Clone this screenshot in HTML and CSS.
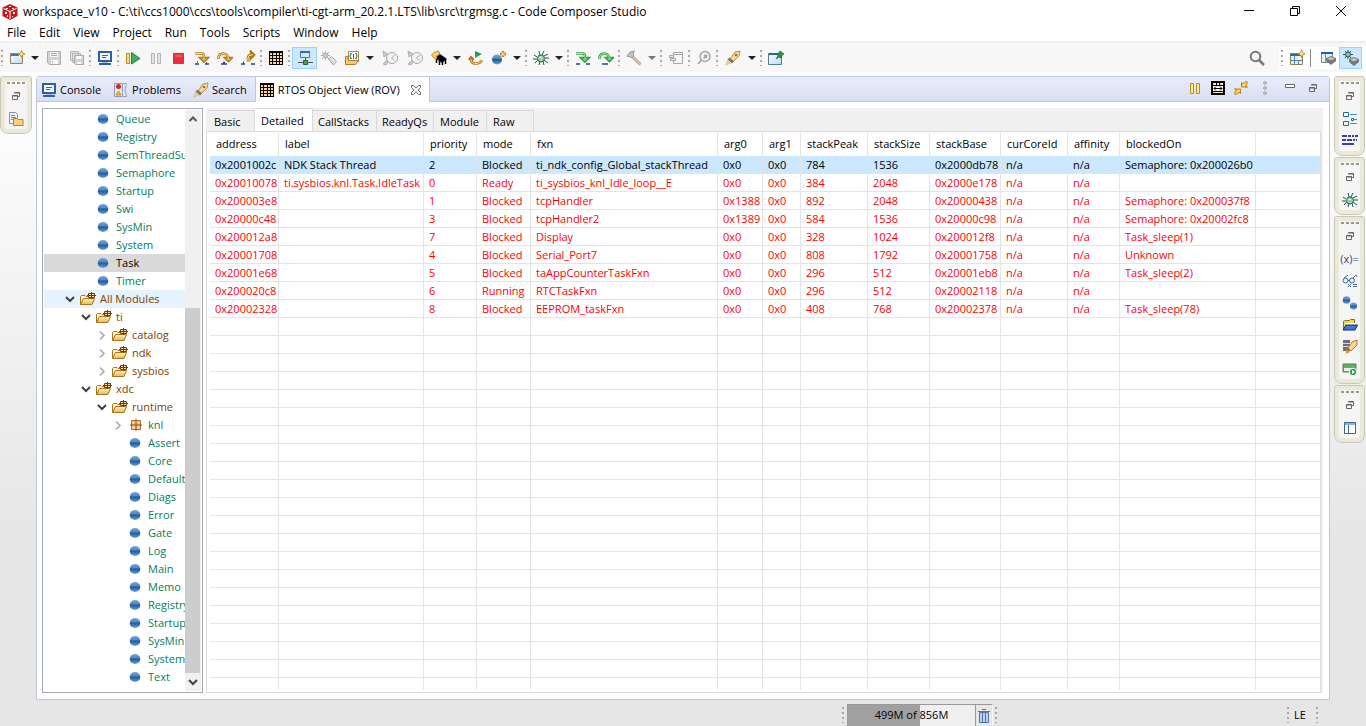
FILE: index.html
```html
<!DOCTYPE html>
<html lang="en">
<head>
<meta charset="utf-8">
<title>workspace_v10 - Code Composer Studio</title>
<link rel="stylesheet" href="styles.css">
</head>
<body>
<svg class="defs" aria-hidden="true">
  <defs>
    <linearGradient id="ball" x1="0" y1="0" x2="0" y2="1"><stop offset="0" stop-color="#7ba6cf"/><stop offset=".4" stop-color="#4f86bb"/><stop offset=".5" stop-color="#1a5a9c"/><stop offset="1" stop-color="#6fa0cd"/></linearGradient>
    <linearGradient id="gold" x1="0" y1="0" x2="0" y2="1"><stop offset="0" stop-color="#fff3c4"/><stop offset="1" stop-color="#e9b850"/></linearGradient>
    <linearGradient id="sky" x1="0" y1="0" x2="1" y2="1"><stop offset="0" stop-color="#fff"/><stop offset="1" stop-color="#b8dcee"/></linearGradient>
  </defs>
  <symbol id="cube" viewBox="0 0 16 16"><path d="M8 0l7.500 3.500v8.500L8 16 .5 12V3.500z" fill="#c8161d"/><path d="M1.500 4.500l6.500 3 6.500-3M8 7.500V15" stroke="#fff" fill="none"/><path d="M7 2h2v1H7zM4 4h2v1H4zM10 4h2v1h-2zM3 8h2v2H3zM5 11h1v2H5zM11 8h2v2h-2zM10 12h1v1h-1z" fill="#fff"/></symbol>
  <symbol id="dot" viewBox="0 0 16 16"><ellipse cx="8" cy="8" rx="5.300" ry="5" fill="url(#ball)"/></symbol>
  <symbol id="pkgs" viewBox="0 0 16 16"><path d="M.5 13.500v-8l1-1H5l1 1h7.500v3" fill="#fff1c8" stroke="#a9741b"/><path d="M.5 13.500l3-6h11l-2.500 6z" fill="url(#gold)" stroke="#a9741b"/><path d="M8.500 2.500h6v4h-6z" fill="#f6dcb0" stroke="#6b3d14"/><path d="M7 4.500h9M11.500 1v7" fill="none" stroke="#6b3d14"/></symbol>
  <symbol id="pkg" viewBox="0 0 16 16"><path d="M3.500 3.500h9v9h-9z" fill="#f3c68c" stroke="#b36a2c"/><path d="M8 2v12M2 8h12" stroke="#8c4a1c"/><path d="M5 5h1v1H5zM10 5h1v1h-1zM5 10h1v1H5zM10 10h1v1h-1z" fill="#fff0d0"/></symbol>
  <symbol id="down" viewBox="0 0 16 16"><path d="M4 6l4 4 4-4" fill="none" stroke="#404040" stroke-width="2"/></symbol>
  <symbol id="up" viewBox="0 0 16 16"><path d="M4.500 10L8 6.500l3.500 3.500" fill="none" stroke="#555" stroke-width="2"/></symbol>
  <symbol id="right" viewBox="0 0 16 16"><path d="M6 4.500l4 4-4 4" fill="none" stroke="#a6a6a6" stroke-width="1.500"/></symbol>
  <symbol id="new" viewBox="0 0 16 16"><path d="M1.500 3.500h12v10h-12z" fill="url(#sky)" stroke="#9a8148"/><path d="M2 4h8v2H2z" fill="#3f78b5"/><path d="M12.500.5l1 2.500 2.500 1-2.500 1-1 2.500-1-2.500L9 4l2.500-1z" fill="#ffe9a0" stroke="#b38213" stroke-width=".8"/></symbol>
  <symbol id="save" viewBox="0 0 16 16"><path d="M1.500 1.500h13v13h-11l-2-2z" fill="#d2d2d2" stroke="#acacac"/><path d="M4 2h8v5H4zM5 10h7v4H5z" fill="#f7f7f7"/><path d="M5 3.500h6M5 5.500h6M6.500 11v2" stroke="#aaa"/></symbol>
  <symbol id="saveall" viewBox="0 0 16 16"><path d="M1.500 1.500h8v9h-8zM3.500 3.500h8v9h-8z" fill="#e2e2e2" stroke="#b4b4b4"/><path d="M5.500 5.500h9v9h-8l-1-1z" fill="#d2d2d2" stroke="#aaa"/><path d="M7.500 6h5v3h-5zM8 12h4v2H8z" fill="#fff"/></symbol>
  <symbol id="console" viewBox="0 0 16 16"><path d="M2 2h12v9H2z" fill="#f4f8fd" stroke="#2d5fa0" stroke-width="2"/><path d="M5 5.500h6M5 7.500h4" stroke="#53607c"/><path d="M2 14h12" stroke="#365f9c" stroke-width="2"/><path d="M5 12.500h6" stroke="#a9bdd6"/></symbol>
  <symbol id="resume" viewBox="0 0 16 16"><path d="M1.500 3.500h3v10h-3z" fill="#f6dc80" stroke="#b08f24"/><path d="M6.500 2.500L15 8.500l-8.500 5.500z" fill="#43ad5c" stroke="#278047"/></symbol>
  <symbol id="pause" viewBox="0 0 16 16"><path d="M3.500 3.500h3v10h-3zM9.500 3.500h3v10h-3z" fill="#e4e4e4" stroke="#b4b4b4"/></symbol>
  <symbol id="pausegold" viewBox="0 0 16 16"><path d="M3.500 3.500h3v10h-3zM9.500 3.500h3v10h-3z" fill="#fbe69a" stroke="#bd8c17"/></symbol>
  <symbol id="stop" viewBox="0 0 16 16"><path d="M2.500 3.500h10v10h-10z" fill="#e8303c" stroke="#d33"/><path d="M4 5h7v2H4z" fill="#f05a62"/></symbol>
  <symbol id="into" viewBox="0 0 16 16"><path d="M1 3.500h6.500q2.500 0 2.500 3v2M6.500 8L10 11.500 13.500 8z" fill="none" stroke="#b27b19" stroke-width="2.600"/><path d="M1 3.500h6.500q2.500 0 2.500 3v3M8 8.500l2 2 2-2" fill="none" stroke="#fbe08f"/><path d="M1 14h4M11 14h4M3 12h1M12 13h1" stroke="#24467e" stroke-width="1.500"/></symbol>
  <symbol id="over" viewBox="0 0 16 16"><path d="M1.500 9V7q1-3.500 5-3.500t5 5.500M8.500 8l3 3 3-3z" fill="none" stroke="#b27b19" stroke-width="2.600"/><path d="M1.500 8.500V7q1-3.500 5-3.500t5 5.500M10 8.500l1.500 1.500L13 8.500" fill="none" stroke="#fbe08f"/><path d="M4 14h6M6 12.500h2" stroke="#24467e" stroke-width="1.500"/></symbol>
  <symbol id="ret" viewBox="0 0 16 16"><path d="M8 12V8q0-3 3-3h1M11 2l3 3-3 3z" fill="none" stroke="#b27b19" stroke-width="2.600"/><path d="M8 12V8q0-3 3-3h2" fill="none" stroke="#fbe08f"/><path d="M1 14h4M11 14h4M3 12.500h1" stroke="#24467e" stroke-width="1.500"/></symbol>
  <symbol id="ginto" viewBox="0 0 16 16"><path d="M1 3.500h6.500q2.500 0 2.500 3v2M6.500 8L10 11.500 13.500 8z" fill="none" stroke="#30a048" stroke-width="2.600"/><path d="M1 3.500h6.500q2.500 0 2.500 3v3M8 8.500l2 2 2-2" fill="none" stroke="#b8ecb0"/><path d="M1 14h4M11 14h4" stroke="#24467e" stroke-width="1.500"/></symbol>
  <symbol id="gover" viewBox="0 0 16 16"><path d="M1.500 9V7q1-3.500 5-3.500t5 5.500M8.500 8l3 3 3-3z" fill="none" stroke="#30a048" stroke-width="2.600"/><path d="M1.500 8.500V7q1-3.500 5-3.500t5 5.500M10 8.500l1.500 1.500L13 8.500" fill="none" stroke="#b8ecb0"/><path d="M4 14h6" stroke="#24467e" stroke-width="1.500"/></symbol>
  <symbol id="grid" viewBox="0 0 16 16"><path d="M1 1h14v14H1z" fill="#000"/><path d="M2 3h2v2H2zM5 3h3v2H5zM9 3h2v2H9zM12 3h2v2h-2zM2 6h2v2H2zM5 6h3v2H5zM9 6h2v2H9zM12 6h2v2h-2zM2 9h2v2H2zM5 9h3v2H5zM9 9h2v2H9zM12 9h2v2h-2zM2 12h2v2H2zM5 12h3v2H5zM9 12h2v2H9zM12 12h2v2h-2z" fill="#ffd98a"/></symbol>
  <symbol id="probe" viewBox="0 0 16 16"><path d="M3.500 1.500h9v6h-9z" fill="#d7e7f6" stroke="#4778ae"/><path d="M3 2h10" stroke="#386aa5" stroke-width="2"/><path d="M8.500 7.500V11M1 12.500h15" stroke="#555"/><path d="M6.500 10.500h4v4h-4z" fill="#5a9c48" stroke="#27672b"/></symbol>
  <symbol id="plug" viewBox="0 0 16 16"><path d="M0 5.500h9M4.500 1v9M1 2l7 7M8 2L1 9" stroke="#aaa"/><circle cx="4.500" cy="5.500" r="2.500" fill="#ccc" stroke="#aaa"/><path d="M7.500 9l3-2.500 5 5-3 3.500z" fill="#e2e2e2" stroke="#a3a3a3"/></symbol>
  <symbol id="load" viewBox="0 0 16 16"><path d="M4.500 1.500h10v10h-10z" fill="#fff" stroke="#b0863b"/><path d="M8 3.500H6.500v2l-1 .5 1 .5v2H8M11 3.500h1.500v2l1 .5-1 .5v2H11M9.500 4v5" fill="none" stroke="#24768b"/><path d="M1.500 6.500v8h10l3-4h-10l-1-4z" fill="#f5cb70" stroke="#b47b20"/></symbol>
  <symbol id="clock" viewBox="0 0 16 16"><circle cx="10" cy="8" r="5.500" fill="#f3f3f3" stroke="#aaa"/><path d="M9.500 8L13 5M9.500 8l3 2.500" stroke="#aaa"/><path d="M1 1l5 3-4 3zM1 14l4-4 1 2-2 3z" fill="#ccc" stroke="#b0b0b0"/></symbol>
  <symbol id="chip" viewBox="0 0 16 16"><path d="M4 8l5-4 7 5-5 4z" fill="#000"/><path d="M5.500 9v4M8.500 11v4M11.500 12v3M14.500 10v4" stroke="#000" stroke-width="1.500"/><path d="M.5 5l3-3h2l1-1.500L9 3 7 5.500 5.500 6v3L3 8z" fill="#f6ce67" stroke="#bd8c22"/></symbol>
  <symbol id="restart" viewBox="0 0 16 16"><path d="M1 10l2-2.500L5.500 10M3 9q0 5 6 4.500 4-.5 4.500-3.500" fill="none" stroke="#aa741b" stroke-width="2.600"/><path d="M3 9q0 5 6 4.500 4-.5 4.500-3.500" fill="none" stroke="#fbe08f"/><path d="M7 1l7 3-7 4z" fill="#2b995c"/></symbol>
  <symbol id="sphere" viewBox="0 0 16 16"><circle cx="6" cy="9.500" r="5" fill="url(#ball)"/><path d="M12 1v6M9 4h6" stroke="#b88119" stroke-width="2.500"/><path d="M12 2v4M10 4h4" stroke="#ffe39a"/></symbol>
  <symbol id="bug" viewBox="0 0 16 16"><path d="M1 5l3 2M0 9h4M2 13l3-3M6 1l1 4M11 1L9 5M15 4l-4 2M16 8h-4M15 13l-4-3M6 15l1-4M11 15l-1-4" stroke="#264f4c"/><ellipse cx="8" cy="8.500" rx="3.500" ry="3.500" fill="#9ecfa4" stroke="#22685c"/><path d="M6 7.500h3" stroke="#e6f5d8"/></symbol>
  <symbol id="hammer" viewBox="0 0 16 16"><path d="M6 5l9 8.500L13.500 15 5 7z" fill="#dcbfae" stroke="#b79a88"/><path d="M1 6l3-4 5-1-2 2 1 2-3 3-2-2-1 1z" fill="#c4c4c4" stroke="#9a9a9a"/></symbol>
  <symbol id="stack" viewBox="0 0 16 16"><path d="M5.500 5V2.500h9v11h-9V11M5 4.500h9" fill="none" stroke="#a7a7a7"/><path d="M1.500 5.500h4v2h-4zM2.500 8.500h5v2h-5z" fill="#eee" stroke="#a5a5a5"/></symbol>
  <symbol id="lens" viewBox="0 0 16 16"><circle cx="9" cy="6.500" r="5" fill="#f6f6f6" stroke="#a5a5a5" stroke-width="1.500"/><path d="M5.500 10L2 14M7.500 8.500L11 5M8 5.500h2.500V8" fill="none" stroke="#a0a0a0" stroke-width="1.500"/></symbol>
  <symbol id="rocket" viewBox="0 0 16 16"><path d="M5.500 8.500L10 2l5-1-1 5-6 5.500z" fill="#ffd992" stroke="#c88930"/><path d="M4.500 7.500l4.500 4-2 2-4.500-4z" fill="#7d7478"/><path d="M1 15l1.500-4.500 3 2.500z" fill="#f2dd95" stroke="#dcc070"/><circle cx="11" cy="5" r="1.300" fill="#587ba5"/></symbol>
  <symbol id="pin" viewBox="0 0 16 16"><path d="M.5 3.500h13v11H.5z" fill="url(#sky)" stroke="#507b91"/><path d="M1 4h10" stroke="#2965a5" stroke-width="2"/><path d="M8 9l2-3-1-2 2-1 1-2 4 3-2 1-1 3-2-1z" fill="#26934e" stroke="#176336" stroke-width=".7"/></symbol>
  <symbol id="search" viewBox="0 0 16 16"><circle cx="6.500" cy="6.500" r="4.800" fill="none" stroke="#777" stroke-width="2"/><path d="M10 10l5 5" stroke="#777" stroke-width="2.500"/></symbol>
  <symbol id="persp" viewBox="0 0 16 16"><path d="M1.500 3.500h12v11h-12z" fill="#e3f1fa" stroke="#8a8056"/><path d="M1 5h12" stroke="#2d6aa5" stroke-width="2"/><path d="M5.500 6v8M2 10.500h11M9.500 10v4" stroke="#5285a6"/><path d="M12.500 0l1 2.500L16 4l-2.500 1-1 2.500-1-2.500L9 4l2.500-1.500z" fill="#ffe7a0" stroke="#b38213" stroke-width=".8"/></symbol>
  <symbol id="edit" viewBox="0 0 16 16"><path d="M1.500 2.500h11v10h-11z" fill="#e3f1fa" stroke="#718c72"/><path d="M1 3h12" stroke="#195fa9" stroke-width="2"/><path d="M5.500 4v8M5 8.500h8" stroke="#7796a5"/><path d="M6 8l5-2 5 2v3l-5 4-5-4z" fill="#777"/><path d="M7 8.500l4 2 4-2-4-1.500z" fill="#c0c0c0"/></symbol>
  <symbol id="debug" viewBox="0 0 16 16"><path d="M0 4.500h10M2 1l6 7M8 1L2 8M5 0v9" stroke="#24584d"/><circle cx="5" cy="4.500" r="2.500" fill="#8ac6a0" stroke="#24584d"/><path d="M6 9l5-2 5 2v3l-5 4-5-4z" fill="#777"/><path d="M7 9.500l4 2 4-2L11 8z" fill="#c5c5c5"/></symbol>
  <symbol id="problems" viewBox="0 0 16 16"><path d="M1.500 1.500h8v13h-8z" fill="#eee8dc" stroke="#8a9ab5"/><path d="M9.500 1.500h4L12 8l1.500 6.500h-4z" fill="#dce8f5" stroke="#95a4bd"/><circle cx="5.500" cy="4.500" r="2.500" fill="#d92531"/><path d="M3 13l2.500-4L8 13z" fill="#f5c24f" stroke="#c88f20"/></symbol>
  <symbol id="close" viewBox="0 0 16 16"><path d="M3.500 3.500h2L8 6l2.500-2.500h2v2L10 8l2.500 2.500v2h-2L8 10l-2.500 2.500h-2v-2L6 8 3.500 5.500z" fill="#fff" stroke="#6c6c6c"/></symbol>
  <symbol id="width" viewBox="0 0 16 16"><path d="M2 2h12v12H2z" fill="#fff" stroke="#000" stroke-width="2"/><path d="M3 3h3v2H3zM7 3h2v2H7zM10 3h3v2h-3zM3 12h3v1H3zM7 12h2v1H7zM10 12h3v1h-3z" fill="#ffe1a0"/><path d="M2 5.500h12M2 11.500h12M6.500 2v4M9.500 2v4M4 8.500h8M6 6.500l-2 2 2 2M10 6.500l2 2-2 2" fill="none" stroke="#000"/></symbol>
  <symbol id="refresh" viewBox="0 0 16 16"><path d="M8.500 7V2.500L10 4q1-2.500 4-2.500v3q-1 0-1.500 2L14.500 7zM7.500 9v4.500L6 12q-1 2.500-4 2.500v-3q1 0 1.500-2L1.500 9z" fill="#ffd566" stroke="#bb800b"/></symbol>
  <symbol id="more" viewBox="0 0 16 16"><path d="M8 1.500l1.500 1.500L8 4.500 6.500 3zM8 6.500L9.500 8 8 9.500 6.500 8zM8 11.500L9.500 13 8 14.500 6.500 13z" fill="#fff" stroke="#777"/></symbol>
  <symbol id="min" viewBox="0 0 16 16"><path d="M3.500 4.500h9v3h-9z" fill="#fff" stroke="#666"/></symbol>
  <symbol id="restore" viewBox="0 0 16 16"><path d="M6.500 4.500h5v4h-2M6 5h6M4.500 7.500h5v4h-5zM4 8h6" fill="none" stroke="#6c6663"/></symbol>
  <symbol id="folders" viewBox="0 0 16 16"><path d="M1.500 1.500h6l2 2v9h-8z" fill="#eef4fb" stroke="#7795b6"/><path d="M3 4.500h4M3 6.500h5M3 8.500h3" stroke="#698eb5"/><path d="M5.500 14.500v-7H9l1 1h5v6z" fill="#fbd278" stroke="#be8129"/></symbol>
  <symbol id="outline" viewBox="0 0 16 16"><path d="M1.500 1.500h5v4h-5zM1.500 10.500h5v4h-5zM9.500 7.500h2v2h-2z" fill="#fff" stroke="#1c67b1"/><path d="M8 3.500h7M8 12.500h7M12 8.500h3" stroke="#4a94c5"/></symbol>
  <symbol id="trace" viewBox="0 0 16 16"><path d="M0 3h16" stroke="#3841a8" stroke-width="2" stroke-dasharray="5 1 3 1 2 1"/><path d="M0 7h15" stroke="#3841a8" stroke-width="2" stroke-dasharray="4 1 5 1 2 1"/><path d="M0 11h12" stroke="#3841a8" stroke-width="2"/></symbol>
  <symbol id="glasses" viewBox="0 0 16 16"><circle cx="3.500" cy="7.500" r="2.500" fill="#e4eef8" stroke="#416991"/><circle cx="10" cy="7.500" r="2.500" fill="#e4eef8" stroke="#416991"/><path d="M2 5l4-3M11 5l3-3 1 2M6 7.500h2M6 11l3 3M9 11l-3 3M11 11.500h4M11 13.500h4" fill="none" stroke="#416991"/></symbol>
  <symbol id="balls" viewBox="0 0 16 16"><circle cx="4.500" cy="5" r="3.800" fill="url(#ball)"/><circle cx="11.500" cy="11" r="3.500" fill="url(#ball)"/></symbol>
  <symbol id="folder" viewBox="0 0 16 16"><path d="M1.500 12V4.500l2-1h4l1-1h4V6" fill="#f4d95e" stroke="#806d16"/><path d="M4 6h9v3H4z" fill="#fff"/><path d="M1 13l3-5h11.500l-2.500 5z" fill="#4b75ca" stroke="#102b7c"/></symbol>
  <symbol id="mixed" viewBox="0 0 16 16"><path d="M1 1h7v11H1z" fill="#6c6f7b"/><path d="M1 4.500h7M1 7.500h7" stroke="#d8d8d8"/><path d="M6 9l4-6 5-2v5l-6 6z" fill="#ffd38a" stroke="#b87b31"/><path d="M4 10l4 3-4 2z" fill="#d9992d"/></symbol>
  <symbol id="play" viewBox="0 0 16 16"><path d="M1 3h13v8H1z" fill="#63ac62" stroke="#448957"/><path d="M2 7h11v3H2z" fill="#e7efe7"/><circle cx="11" cy="11" r="3.800" fill="#2da352" stroke="#fff"/><path d="M10 9l3 2-3 2z" fill="#fff"/></symbol>
  <symbol id="window" viewBox="0 0 16 16"><path d="M2.500 2.500h11v11h-11z" fill="#fff" stroke="#39679c"/><path d="M3 4h10" stroke="#8cb4da" stroke-width="2"/><path d="M6.500 5v8" stroke="#39679c"/></symbol>
  <symbol id="trash" viewBox="0 0 16 16"><path d="M3.500 4.500h9v10h-9z" fill="#b9cfee" stroke="#5577a8"/><path d="M2 3.500h12M6 1.500h4M6.500 5v9M9.500 5v9" stroke="#5577a8"/></symbol>
</svg>

<header class="titlebar">
  <svg class="i"><use href="#cube"/></svg>
  <h1>workspace_v10 - C:\ti\ccs1000\ccs\tools\compiler\ti-cgt-arm_20.2.1.LTS\lib\src\trgmsg.c - Code Composer Studio</h1>
  <div class="winbtns">
    <button aria-label="Minimize"><svg viewBox="0 0 12 12"><path d="M1 5.500h10" stroke="#000"/></svg></button>
    <button aria-label="Restore"><svg viewBox="0 0 12 12"><path d="M1.500 3.500h7v7h-7zM3.500 3V1.500h7v7H9" fill="none" stroke="#000"/></svg></button>
    <button aria-label="Close"><svg viewBox="0 0 12 12"><path d="M1 1l10 10M11 1L1 11" stroke="#000"/></svg></button>
  </div>
</header>
<nav class="menu">
  <button>File</button><button>Edit</button><button>View</button><button>Project</button><button>Run</button><button>Tools</button><button>Scripts</button><button>Window</button><button>Help</button>
</nav>

<div class="toolbar">
  <i class="h"></i><button class="b" aria-label="New"><svg class="i"><use href="#new"/></svg></button><button class="a" aria-label="New menu"></button>
  <button class="b" aria-label="Save"><svg class="i"><use href="#save"/></svg></button><button class="b" aria-label="Save all"><svg class="i"><use href="#saveall"/></svg></button>
  <i class="h"></i><button class="b" aria-label="Console"><svg class="i"><use href="#console"/></svg></button>
  <i class="h"></i><button class="b" aria-label="Resume"><svg class="i"><use href="#resume"/></svg></button><button class="b" aria-label="Suspend"><svg class="i"><use href="#pause"/></svg></button><button class="b" aria-label="Terminate"><svg class="i"><use href="#stop"/></svg></button><button class="b" aria-label="Step into"><svg class="i"><use href="#into"/></svg></button><button class="b" aria-label="Step over"><svg class="i"><use href="#over"/></svg></button><button class="b" aria-label="Step return"><svg class="i"><use href="#ret"/></svg></button>
  <i class="h"></i><button class="b" aria-label="Object view"><svg class="i"><use href="#grid"/></svg></button>
  <i class="h"></i><button class="b on w" aria-label="Connect target"><svg class="i"><use href="#probe"/></svg></button><button class="b" aria-label="Disconnect"><svg class="i"><use href="#plug"/></svg></button><button class="b" aria-label="Load"><svg class="i"><use href="#load"/></svg></button><button class="a" aria-label="Load menu"></button>
  <button class="b w" aria-label="Clock setup"><svg class="i"><use href="#clock"/></svg></button><button class="b w" aria-label="Clock"><svg class="i"><use href="#clock"/></svg></button><button class="b" aria-label="CPU reset"><svg class="i"><use href="#chip"/></svg></button><button class="a" aria-label="Reset menu"></button>
  <button class="b" aria-label="Restart"><svg class="i"><use href="#restart"/></svg></button><button class="b" aria-label="New breakpoint"><svg class="i"><use href="#sphere"/></svg></button><button class="a" aria-label="Breakpoint menu"></button>
  <i class="h"></i><button class="b" aria-label="Debug"><svg class="i"><use href="#bug"/></svg></button><button class="a" aria-label="Debug menu"></button>
  <i class="h"></i><button class="b" aria-label="Assembly step into"><svg class="i"><use href="#ginto"/></svg></button><button class="b" aria-label="Assembly step over"><svg class="i"><use href="#gover"/></svg></button>
  <i class="h"></i><button class="b" aria-label="Build"><svg class="i"><use href="#hammer"/></svg></button><button class="a dim" aria-label="Build menu"></button>
  <i class="h"></i><button class="b" aria-label="Frames"><svg class="i"><use href="#stack"/></svg></button>
  <i class="h"></i><button class="b" aria-label="Inspect"><svg class="i"><use href="#lens"/></svg></button>
  <i class="h"></i><button class="b w" aria-label="Search files"><svg class="i"><use href="#rocket"/></svg></button><button class="a" aria-label="Search menu"></button>
  <i class="h"></i><button class="b" aria-label="Pin"><svg class="i"><use href="#pin"/></svg></button>
  <button class="b push" aria-label="Quick access"><svg class="i"><use href="#search"/></svg></button>
  <div class="persp"><i class="h"></i><button class="b" aria-label="Open perspective"><svg class="i"><use href="#persp"/></svg></button><i class="bar"></i><button class="b" aria-label="CCS Edit"><svg class="i"><use href="#edit"/></svg></button><button class="b on" aria-label="CCS Debug"><svg class="i"><use href="#debug"/></svg></button></div>
</div>

<div class="work">
  <aside class="side left">
    <div class="trim"><i class="grip"></i><button class="t" aria-label="Restore"><svg class="i"><use href="#restore"/></svg></button><button class="t" aria-label="Projects"><svg class="i"><use href="#folders"/></svg></button></div>
  </aside>
  <main class="view">
    <div class="tabs">
      <button class="tab"><svg class="i"><use href="#console"/></svg>Console</button>
      <button class="tab"><svg class="i"><use href="#problems"/></svg>Problems</button>
      <button class="tab"><svg class="i"><use href="#rocket"/></svg>Search</button>
      <button class="tab cur"><svg class="i"><use href="#grid"/></svg>RTOS Object View (ROV)<svg class="i"><use href="#close"/></svg></button>
      <div class="acts"><button class="b" aria-label="Pause refresh"><svg class="i"><use href="#pausegold"/></svg></button><button class="b" aria-label="Fit columns"><svg class="i"><use href="#width"/></svg></button><button class="b" aria-label="Refresh"><svg class="i"><use href="#refresh"/></svg></button><button class="b wide" aria-label="View menu"><svg class="i"><use href="#more"/></svg></button><button class="b" aria-label="Minimize view"><svg class="i"><use href="#min"/></svg></button><button class="b" aria-label="Restore view"><svg class="i"><use href="#restore"/></svg></button></div>
    </div>
    <div class="content">
      <div class="treebox">
        <ul class="tree">
          <li class="l3"><svg class="i"><use href="#dot"/></svg>Queue</li>
          <li class="l3"><svg class="i"><use href="#dot"/></svg>Registry</li>
          <li class="l3"><svg class="i"><use href="#dot"/></svg>SemThreadSupport</li>
          <li class="l3"><svg class="i"><use href="#dot"/></svg>Semaphore</li>
          <li class="l3"><svg class="i"><use href="#dot"/></svg>Startup</li>
          <li class="l3"><svg class="i"><use href="#dot"/></svg>Swi</li>
          <li class="l3"><svg class="i"><use href="#dot"/></svg>SysMin</li>
          <li class="l3"><svg class="i"><use href="#dot"/></svg>System</li>
          <li class="l3 sel"><svg class="i"><use href="#dot"/></svg>Task</li>
          <li class="l3"><svg class="i"><use href="#dot"/></svg>Timer</li>
          <li class="p l1 hov"><svg class="i"><use href="#down"/></svg><svg class="i"><use href="#pkgs"/></svg>All Modules</li>
          <li class="p l2"><svg class="i"><use href="#down"/></svg><svg class="i"><use href="#pkgs"/></svg>ti</li>
          <li class="p l3a"><svg class="i"><use href="#right"/></svg><svg class="i"><use href="#pkgs"/></svg>catalog</li>
          <li class="p l3a"><svg class="i"><use href="#right"/></svg><svg class="i"><use href="#pkgs"/></svg>ndk</li>
          <li class="p l3a"><svg class="i"><use href="#right"/></svg><svg class="i"><use href="#pkgs"/></svg>sysbios</li>
          <li class="p l2"><svg class="i"><use href="#down"/></svg><svg class="i"><use href="#pkgs"/></svg>xdc</li>
          <li class="p l3a"><svg class="i"><use href="#down"/></svg><svg class="i"><use href="#pkgs"/></svg>runtime</li>
          <li class="l4"><svg class="i"><use href="#right"/></svg><svg class="i"><use href="#pkg"/></svg>knl</li>
          <li class="l5"><svg class="i"><use href="#dot"/></svg>Assert</li>
          <li class="l5"><svg class="i"><use href="#dot"/></svg>Core</li>
          <li class="l5"><svg class="i"><use href="#dot"/></svg>Default</li>
          <li class="l5"><svg class="i"><use href="#dot"/></svg>Diags</li>
          <li class="l5"><svg class="i"><use href="#dot"/></svg>Error</li>
          <li class="l5"><svg class="i"><use href="#dot"/></svg>Gate</li>
          <li class="l5"><svg class="i"><use href="#dot"/></svg>Log</li>
          <li class="l5"><svg class="i"><use href="#dot"/></svg>Main</li>
          <li class="l5"><svg class="i"><use href="#dot"/></svg>Memo</li>
          <li class="l5"><svg class="i"><use href="#dot"/></svg>Registry</li>
          <li class="l5"><svg class="i"><use href="#dot"/></svg>Startup</li>
          <li class="l5"><svg class="i"><use href="#dot"/></svg>SysMin</li>
          <li class="l5"><svg class="i"><use href="#dot"/></svg>System</li>
          <li class="l5"><svg class="i"><use href="#dot"/></svg>Text</li>
        </ul>
        <div class="scroll"><button aria-label="Scroll up"><svg class="i"><use href="#up"/></svg></button><div class="track"><div class="thumb"></div></div><button aria-label="Scroll down"><svg class="i"><use href="#down"/></svg></button></div>
      </div>
      <section class="detail">
        <div class="subtabs"><button>Basic</button><button class="cur">Detailed</button><button class="calls">CallStacks</button><button class="ready">ReadyQs</button><button class="mod">Module</button><button class="raw">Raw</button></div>
        <div class="sheet">
          <table>
            <colgroup><col class="c1"><col class="c2"><col class="c3"><col class="c4"><col class="c5"><col class="c6"><col class="c7"><col class="c8"><col class="c9"><col class="c10"><col class="c11"><col class="c12"><col class="c13"><col></colgroup>
            <thead><tr><th>address</th><th>label</th><th>priority</th><th>mode</th><th>fxn</th><th>arg0</th><th>arg1</th><th>stackPeak</th><th>stackSize</th><th>stackBase</th><th>curCoreId</th><th>affinity</th><th>blockedOn</th><th></th></tr></thead>
            <tbody>
              <tr class="sel"><td>0x2001002c</td><td>NDK Stack Thread</td><td>2</td><td>Blocked</td><td>ti_ndk_config_Global_stackThread</td><td>0x0</td><td>0x0</td><td>784</td><td>1536</td><td>0x2000db78</td><td>n/a</td><td>n/a</td><td>Semaphore: 0x200026b0</td><td></td></tr>
              <tr><td>0x20010078</td><td>ti.sysbios.knl.Task.IdleTask</td><td>0</td><td>Ready</td><td>ti_sysbios_knl_Idle_loop__E</td><td>0x0</td><td>0x0</td><td>384</td><td>2048</td><td>0x2000e178</td><td>n/a</td><td>n/a</td><td></td><td></td></tr>
              <tr><td>0x200003e8</td><td></td><td>1</td><td>Blocked</td><td>tcpHandler</td><td>0x1388</td><td>0x0</td><td>892</td><td>2048</td><td>0x20000438</td><td>n/a</td><td>n/a</td><td>Semaphore: 0x200037f8</td><td></td></tr>
              <tr><td>0x20000c48</td><td></td><td>3</td><td>Blocked</td><td>tcpHandler2</td><td>0x1389</td><td>0x0</td><td>584</td><td>1536</td><td>0x20000c98</td><td>n/a</td><td>n/a</td><td>Semaphore: 0x20002fc8</td><td></td></tr>
              <tr><td>0x200012a8</td><td></td><td>7</td><td>Blocked</td><td>Display</td><td>0x0</td><td>0x0</td><td>328</td><td>1024</td><td>0x200012f8</td><td>n/a</td><td>n/a</td><td>Task_sleep(1)</td><td></td></tr>
              <tr><td>0x20001708</td><td></td><td>4</td><td>Blocked</td><td>Serial_Port7</td><td>0x0</td><td>0x0</td><td>808</td><td>1792</td><td>0x20001758</td><td>n/a</td><td>n/a</td><td>Unknown</td><td></td></tr>
              <tr><td>0x20001e68</td><td></td><td>5</td><td>Blocked</td><td>taAppCounterTaskFxn</td><td>0x0</td><td>0x0</td><td>296</td><td>512</td><td>0x20001eb8</td><td>n/a</td><td>n/a</td><td>Task_sleep(2)</td><td></td></tr>
              <tr><td>0x200020c8</td><td></td><td>6</td><td>Running</td><td>RTCTaskFxn</td><td>0x0</td><td>0x0</td><td>296</td><td>512</td><td>0x20002118</td><td>n/a</td><td>n/a</td><td></td><td></td></tr>
              <tr><td>0x20002328</td><td></td><td>8</td><td>Blocked</td><td>EEPROM_taskFxn</td><td>0x0</td><td>0x0</td><td>408</td><td>768</td><td>0x20002378</td><td>n/a</td><td>n/a</td><td>Task_sleep(78)</td><td></td></tr>
              <tr class="fill"><td></td><td></td><td></td><td></td><td></td><td></td><td></td><td></td><td></td><td></td><td></td><td></td><td></td><td></td></tr>
            </tbody>
          </table>
        </div>
      </section>
    </div>
  </main>
  <aside class="side right">
    <div class="trim"><i class="grip"></i><button class="t" aria-label="Restore"><svg class="i"><use href="#restore"/></svg></button><button class="t" aria-label="Outline"><svg class="i"><use href="#outline"/></svg></button><button class="t" aria-label="Disassembly"><svg class="i"><use href="#trace"/></svg></button></div>
    <div class="trim"><i class="grip"></i><button class="t" aria-label="Restore"><svg class="i"><use href="#restore"/></svg></button><button class="t" aria-label="Debug"><svg class="i"><use href="#bug"/></svg></button></div>
    <div class="trim"><i class="grip"></i><button class="t" aria-label="Restore"><svg class="i"><use href="#restore"/></svg></button><button class="t var">(x)=</button><button class="t" aria-label="Expressions"><svg class="i"><use href="#glasses"/></svg></button><button class="t" aria-label="Breakpoints"><svg class="i"><use href="#balls"/></svg></button><button class="t" aria-label="Files"><svg class="i"><use href="#folder"/></svg></button><button class="t" aria-label="Target configurations"><svg class="i"><use href="#mixed"/></svg></button><button class="t" aria-label="Runtime"><svg class="i"><use href="#play"/></svg></button></div>
    <div class="trim"><i class="grip"></i><button class="t" aria-label="Restore"><svg class="i"><use href="#restore"/></svg></button><button class="t" aria-label="Editor"><svg class="i"><use href="#window"/></svg></button></div>
  </aside>
</div>

<footer class="status">
  <i class="h"></i><div class="heap">499M of 856M</div><button class="gc" aria-label="Run garbage collector"><svg class="i"><use href="#trash"/></svg></button><i class="h"></i>
  <div class="endian"><i class="h"></i><span>LE</span><i class="h"></i></div>
</footer>
</body>
</html>
```
FILE: styles.css
```css
* { box-sizing: border-box; }
html { height: 100%; }
body { margin: 0; height: 100%; min-height: 726px; display: flex; flex-direction: column; background: #fff; color: #000; font: 11px/16px "Open Sans", "Noto Sans", sans-serif; overflow: hidden; }
button { font: inherit; color: inherit; background: none; border: 0; padding: 0; margin: 0; white-space: nowrap; }
.defs { position: absolute; width: 0; height: 0; }
.i { width: 16px; height: 16px; flex: none; display: block; }

.titlebar { display: flex; align-items: center; height: 24px; padding-left: 2px; gap: 5px; flex: none; }
h1 { margin: 0; font-size: 12px; font-weight: 400; white-space: nowrap; }
.winbtns { margin-left: auto; display: flex; padding-right: 2px; }
.winbtns button { width: 46px; height: 24px; padding-bottom: 3px; display: grid; place-items: center; }
.winbtns svg { width: 12px; height: 12px; }
.menu { display: flex; gap: 13px; height: 17px; padding-left: 7px; flex: none; font-size: 12px; }

.toolbar { display: flex; align-items: center; height: 31px; background: #f7f7f7; border-top: 2px solid #efefef; flex: none; }
.h { width: 5px; height: 16px; flex: none; background: repeating-linear-gradient(#aaa79a 0 2px, transparent 2px 5px) 1px 0 / 2px 16px no-repeat; }
.b { width: 23px; height: 22px; flex: none; display: grid; place-items: center; }
.w { width: 25px; }
.on { background: #cce8ff; border: 1px solid #99d1ff; }
.a { width: 14px; height: 22px; flex: none; display: grid; place-items: center; }
.a::before { content: ""; border: 4px solid transparent; border-top-color: #222; border-bottom: 0; }
.dim::before { border-top-color: #777; }
.push { margin-left: auto; }
.persp { display: flex; align-items: center; margin-left: 11px; padding: 0 4px 0 1px; background: #fff; }
.bar { width: 1px; height: 18px; background: #888; margin: 0 5px 0 2px; }

.work { flex: 1; min-height: 0; display: flex; padding-top: 4px; background: linear-gradient(#fff, #e6e6e6 75%); }
.side { flex: none; width: 36px; }
.right { padding-left: 4px; }
.trim { width: 32px; padding: 5px 0 3px; margin-bottom: 1px; background: #f5f5f6; border: 1px solid #c9c7ba; border-radius: 3px 3px 8px 8px; box-shadow: inset 0 0 0 4px #ebe9d8; display: flex; flex-direction: column; align-items: center; }
.right .trim { width: 31px; }
.grip { width: 18px; height: 2px; background: repeating-linear-gradient(90deg, #9b978b 0 3px, transparent 3px 5px); }
.t { width: 22px; height: 22px; display: grid; place-items: center; }
.trim .grip + .t { height: 24px; }
.var { color: #39446f; }

.view { flex: 1; min-width: 0; background: #fff; border: 1px solid #bec6dc; border-radius: 3px 3px 0 0; display: flex; flex-direction: column; }
.tabs { display: flex; height: 25px; flex: none; background: linear-gradient(#e8edfc, #d9dff1); border-bottom: 1px solid #c0c7dc; }
.tab { display: flex; align-items: center; gap: 3px; padding: 1px 8px 0 4px; }
.tab.cur { background: #fff; border: solid #c0c7dc; border-width: 0 1px; height: 25px; padding: 1px 5px 0 3px; }
.cur .i + .i { margin-left: 5px; }
.acts { display: flex; margin-left: auto; padding-right: 5px; }
.wide { width: 26px; }

.content { flex: 1; min-height: 0; display: flex; gap: 3px; padding: 6px 6px 6px 5px; }
.treebox { width: 161px; flex: none; display: flex; border: 1px solid #a5a9b2; padding: 1px; }
.tree { flex: 1; min-width: 0; overflow: hidden; margin: 0; padding: 0; list-style: none; color: #008060; }
.tree li { display: flex; align-items: center; height: 18px; white-space: nowrap; }
.tree .i + .i { margin-left: 2px; margin-right: 4px; }
.l3 { padding-left: 51px; gap: 5px; }
.l5 { padding-left: 83px; gap: 5px; }
.l1 { padding-left: 18px; }
.l2 { padding-left: 34px; }
.l3a { padding-left: 50px; }
.l4 { padding-left: 66px; }
.tree .p { color: #804000; }
.tree .sel { background: #d9d9d9; color: #000; }
.hov { background: #e5f3ff; }
.scroll { width: 16px; flex: none; display: flex; flex-direction: column; background: #f0f0f0; }
.scroll button { width: 16px; height: 18px; display: grid; place-items: center; }
.track { flex: 1; display: flex; flex-direction: column; justify-content: flex-end; }
.thumb { width: 15px; height: 67%; background: #cdcdcd; }

.detail { flex: 1; min-width: 0; display: flex; flex-direction: column; background: #f0f0f0; padding-right: 2px; }
.subtabs { display: flex; align-items: flex-end; height: 23px; flex: none; padding-left: 2px; }
.subtabs button { height: 21px; padding: 2px 0 0 6px; border: 1px solid #d9d9d9; border-left: 0; border-bottom: 0; text-align: left; }
.subtabs button:first-child { width: 47px; }
.subtabs .cur { height: 23px; width: 58px; background: #fff; padding-top: 1px; }
.subtabs .calls { width: 64px; padding-left: 5px; }
.subtabs .ready { width: 57px; padding-left: 5px; }
.subtabs .mod { width: 53px; }
.subtabs .raw { width: 47px; }
.sheet { flex: 1; min-height: 0; background: #fff; border: 1px solid #dcdcdc; padding: 1px 0 2px 3px; display: flex; }
table { width: 100%; height: 100%; border-collapse: separate; border-spacing: 0; table-layout: fixed; }
th, td { padding: 0 0 0 5px; text-align: left; font-weight: 400; white-space: nowrap; border-right: 1px solid #e4e4e4; overflow: hidden; }
th { height: 23px; padding: 0 0 2px 6px; }
td { height: 18px; line-height: 17px; border-bottom: 1px solid #e4e4e4; color: #f00; }
th:last-child, td:last-child { border-right: 0; }
.sel td { background: #cce8ff; color: #000; }
.fill { background: repeating-linear-gradient(#fff 0 17px, #e4e4e4 17px 18px); }
.fill td { height: auto; border-bottom: 0; }
.c1 { width: 69px; } .c2 { width: 145px; } .c3 { width: 53px; } .c4 { width: 54px; } .c5 { width: 187px; }
.c6 { width: 45px; } .c7 { width: 38px; } .c8 { width: 67px; } .c9 { width: 62px; } .c10 { width: 71px; }
.c11 { width: 67px; } .c12 { width: 52px; } .c13 { width: 136px; }

.status { display: flex; align-items: center; height: 26px; flex: none; padding: 4px 46px 0 0; background: #e6e6e6; justify-content: flex-end; }
.heap { width: 129px; height: 22px; margin-left: 1px; text-align: center; line-height: 20px; border: 1px solid #999; border-bottom: 0; background: linear-gradient(90deg, #a0a0a0 57%, #f0f0f0 57%); }
.gc { width: 17px; height: 22px; border-top: 1px solid #999; border-right: 1px solid #f8f8f8; }
.status .h { margin-left: 1px; }
.endian { display: flex; margin-left: 286px; gap: 3px; }
.endian span { width: 17px; }
```
